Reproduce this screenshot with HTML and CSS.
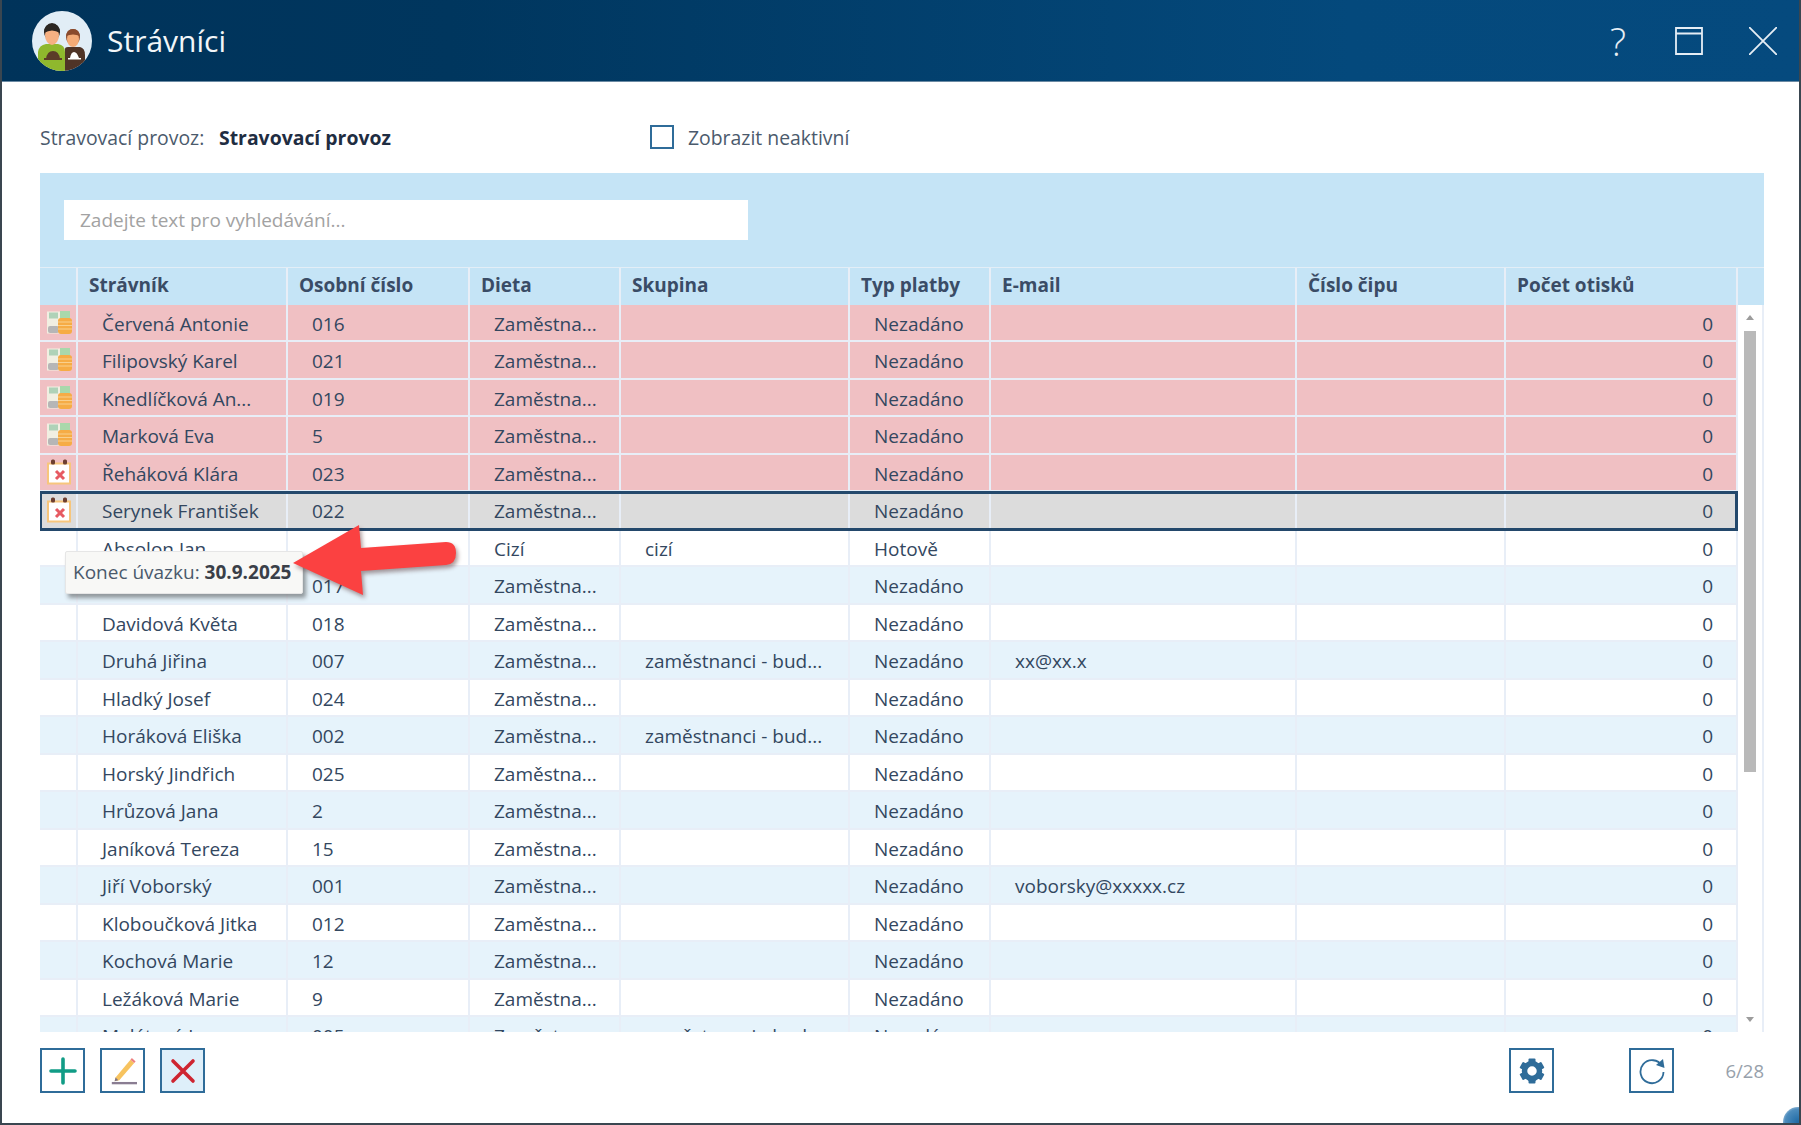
FILE: index.html
```html
<!DOCTYPE html>
<html lang="cs">
<head>
<meta charset="utf-8">
<title>Strávníci</title>
<link rel="stylesheet" href="styles.css">
</head>
<body>
<svg class="defs" width="0" height="0" aria-hidden="true">
  <symbol id="coins" viewBox="0 0 25 23">
    <rect x="0" y="0.500" width="15" height="22" fill="#f1efe2"/>
    <rect x="13" y="0" width="10" height="8" fill="#a9d8ab"/>
    <rect x="2" y="1.500" width="9" height="6" fill="#afd2b8"/>
    <rect x="1" y="15" width="11" height="7" rx="2" fill="#b6b6b6"/>
    <rect x="11" y="7" width="14" height="16" rx="3" fill="#f6ac45"/>
    <path d="M11 11h14M11 14.500h14M11 18h14" stroke="#f9d08e" stroke-width="1"/>
  </symbol>
  <symbol id="cal" viewBox="0 0 24 26">
    <rect x="1" y="4.500" width="22" height="20" fill="#fff" stroke="#f7c67c" stroke-width="2"/>
    <rect x="4" y="0.500" width="4" height="5" rx="1.500" fill="#6d3f30"/>
    <rect x="16" y="0.500" width="4" height="5" rx="1.500" fill="#6d3f30"/>
    <path d="M9 12l8 8M17 12l-8 8" stroke="#e65a62" stroke-width="3"/>
  </symbol>
</svg>

<div class="window">
  <header class="titlebar">
    <svg class="avatar" viewBox="0 0 60 60" aria-hidden="true">
      <circle cx="30" cy="30" r="30" fill="#e1edf6"/>
      <clipPath id="ac"><circle cx="30" cy="30" r="30"/></clipPath>
      <g clip-path="url(#ac)">
        <path d="M33 60V38q0-2 3-2h12q5 1 5 8v16z" fill="#4f3427"/>
        <ellipse cx="41" cy="26" rx="7" ry="8" fill="#8a4a2c"/>
        <ellipse cx="41" cy="28" rx="6" ry="8" fill="#f4ab77"/>
        <path d="M34 25q1-7 7-7t7 7q-7-3-14 0z" fill="#8a4a2c"/>
        <path d="M6 60V41q1-7 8-8h12q7 1 7 8v19z" fill="#8fb82d"/>
        <ellipse cx="20" cy="21" rx="8" ry="9" fill="#2c2622"/>
        <ellipse cx="20" cy="24" rx="7" ry="10" fill="#f6b082"/>
        <path d="M12 22q0-9 8-9t8 9q-8-5-16 0z" fill="#2c2622"/>
        <path d="M14 48q1-8 7-8t7 8z" fill="#5b3c28"/>
        <rect x="12" y="47" width="18" height="2" fill="#5b3c28"/>
        <path d="M38 47q1-6 4-6t5 6z" fill="#fff"/>
        <rect x="36" y="47" width="13" height="1.500" fill="#fff"/>
      </g>
    </svg>
    <h1 class="title">Strávníci</h1>
    <div class="win-actions">
      <span class="win-help">?</span>
      <svg class="win-icon" viewBox="0 0 28 28" aria-hidden="true"><path d="M1 1h26v26H1zM1 6.500h26" fill="none" stroke="#e6eef5" stroke-width="1.800"/></svg>
      <svg class="win-icon win-close" viewBox="0 0 28 28" aria-hidden="true"><path d="M0 0l28 28M28 0L0 28" fill="none" stroke="#e6eef5" stroke-width="1.800"/></svg>
    </div>
  </header>

  <main class="content">
    <div class="filters">
      <span class="filter-label">Stravovací provoz:</span>
      <strong class="filter-value">Stravovací provoz</strong>
      <label class="check"><span class="check-box"></span>Zobrazit neaktivní</label>
    </div>

    <section class="panel">
      <div class="search-area"><div class="search">Zadejte text pro vyhledávání...</div></div>
      <div class="row head">
        <div class="c"></div><div class="c">Strávník</div><div class="c">Osobní číslo</div><div class="c">Dieta</div><div class="c">Skupina</div><div class="c">Typ platby</div><div class="c">E-mail</div><div class="c">Číslo čipu</div><div class="c">Počet otisků</div><div class="c"></div>
      </div>
      <div class="body">
        <div class="rows">
          <div class="row red"><div class="c"><svg class="ico"><use href="#coins"/></svg></div><div class="c">Červená Antonie</div><div class="c">016</div><div class="c">Zaměstna...</div><div class="c"></div><div class="c">Nezadáno</div><div class="c"></div><div class="c"></div><div class="c num">0</div></div>
          <div class="row red"><div class="c"><svg class="ico"><use href="#coins"/></svg></div><div class="c">Filipovský Karel</div><div class="c">021</div><div class="c">Zaměstna...</div><div class="c"></div><div class="c">Nezadáno</div><div class="c"></div><div class="c"></div><div class="c num">0</div></div>
          <div class="row red"><div class="c"><svg class="ico"><use href="#coins"/></svg></div><div class="c">Knedlíčková An...</div><div class="c">019</div><div class="c">Zaměstna...</div><div class="c"></div><div class="c">Nezadáno</div><div class="c"></div><div class="c"></div><div class="c num">0</div></div>
          <div class="row red"><div class="c"><svg class="ico"><use href="#coins"/></svg></div><div class="c">Marková Eva</div><div class="c">5</div><div class="c">Zaměstna...</div><div class="c"></div><div class="c">Nezadáno</div><div class="c"></div><div class="c"></div><div class="c num">0</div></div>
          <div class="row red"><div class="c"><svg class="ico cal"><use href="#cal"/></svg></div><div class="c">Řeháková Klára</div><div class="c">023</div><div class="c">Zaměstna...</div><div class="c"></div><div class="c">Nezadáno</div><div class="c"></div><div class="c"></div><div class="c num">0</div></div>
          <div class="row selected"><div class="c"><svg class="ico cal"><use href="#cal"/></svg></div><div class="c">Serynek František</div><div class="c">022</div><div class="c">Zaměstna...</div><div class="c"></div><div class="c">Nezadáno</div><div class="c"></div><div class="c"></div><div class="c num">0</div></div>
          <div class="row"><div class="c"></div><div class="c">Absolon Jan</div><div class="c"></div><div class="c">Cizí</div><div class="c">cizí</div><div class="c">Hotově</div><div class="c"></div><div class="c"></div><div class="c num">0</div></div>
          <div class="row alt"><div class="c"></div><div class="c"></div><div class="c">017</div><div class="c">Zaměstna...</div><div class="c"></div><div class="c">Nezadáno</div><div class="c"></div><div class="c"></div><div class="c num">0</div></div>
          <div class="row"><div class="c"></div><div class="c">Davidová Květa</div><div class="c">018</div><div class="c">Zaměstna...</div><div class="c"></div><div class="c">Nezadáno</div><div class="c"></div><div class="c"></div><div class="c num">0</div></div>
          <div class="row alt"><div class="c"></div><div class="c">Druhá Jiřina</div><div class="c">007</div><div class="c">Zaměstna...</div><div class="c">zaměstnanci - bud...</div><div class="c">Nezadáno</div><div class="c">xx@xx.x</div><div class="c"></div><div class="c num">0</div></div>
          <div class="row"><div class="c"></div><div class="c">Hladký Josef</div><div class="c">024</div><div class="c">Zaměstna...</div><div class="c"></div><div class="c">Nezadáno</div><div class="c"></div><div class="c"></div><div class="c num">0</div></div>
          <div class="row alt"><div class="c"></div><div class="c">Horáková Eliška</div><div class="c">002</div><div class="c">Zaměstna...</div><div class="c">zaměstnanci - bud...</div><div class="c">Nezadáno</div><div class="c"></div><div class="c"></div><div class="c num">0</div></div>
          <div class="row"><div class="c"></div><div class="c">Horský Jindřich</div><div class="c">025</div><div class="c">Zaměstna...</div><div class="c"></div><div class="c">Nezadáno</div><div class="c"></div><div class="c"></div><div class="c num">0</div></div>
          <div class="row alt"><div class="c"></div><div class="c">Hrůzová Jana</div><div class="c">2</div><div class="c">Zaměstna...</div><div class="c"></div><div class="c">Nezadáno</div><div class="c"></div><div class="c"></div><div class="c num">0</div></div>
          <div class="row"><div class="c"></div><div class="c">Janíková Tereza</div><div class="c">15</div><div class="c">Zaměstna...</div><div class="c"></div><div class="c">Nezadáno</div><div class="c"></div><div class="c"></div><div class="c num">0</div></div>
          <div class="row alt"><div class="c"></div><div class="c">Jiří Voborský</div><div class="c">001</div><div class="c">Zaměstna...</div><div class="c"></div><div class="c">Nezadáno</div><div class="c">voborsky@xxxxx.cz</div><div class="c"></div><div class="c num">0</div></div>
          <div class="row"><div class="c"></div><div class="c">Kloboučková Jitka</div><div class="c">012</div><div class="c">Zaměstna...</div><div class="c"></div><div class="c">Nezadáno</div><div class="c"></div><div class="c"></div><div class="c num">0</div></div>
          <div class="row alt"><div class="c"></div><div class="c">Kochová Marie</div><div class="c">12</div><div class="c">Zaměstna...</div><div class="c"></div><div class="c">Nezadáno</div><div class="c"></div><div class="c"></div><div class="c num">0</div></div>
          <div class="row"><div class="c"></div><div class="c">Ležáková Marie</div><div class="c">9</div><div class="c">Zaměstna...</div><div class="c"></div><div class="c">Nezadáno</div><div class="c"></div><div class="c"></div><div class="c num">0</div></div>
          <div class="row alt"><div class="c"></div><div class="c">Malátová J.</div><div class="c">005</div><div class="c">Zaměstna...</div><div class="c">zaměstnanci - bud...</div><div class="c">Nezadáno</div><div class="c"></div><div class="c"></div><div class="c num">0</div></div>
        </div>
        <div class="scrollbar">
          <span class="arrow-up"></span>
          <div class="track"><div class="thumb"></div></div>
          <span class="arrow-down"></span>
        </div>
      </div>
    </section>

    <footer class="footer">
      <button class="btn" aria-label="Přidat"><svg viewBox="0 0 28 28"><path d="M14 2v24M2 14h24" stroke="#119c86" stroke-width="3.600" stroke-linecap="round" fill="none"/></svg></button>
      <button class="btn" aria-label="Upravit"><svg viewBox="0 0 30 30"><path d="M3 28h27" stroke="#8a7d92" stroke-width="2.500"/><path d="M7 22L23 3l4 3.500L11 25l-5 1z" fill="#f7c35f"/><path d="M23 3l1.500-1.800 4 3.500L27 6.500z" fill="#ee7f7f"/><path d="M7 22l-1 4 4-1z" fill="#7d7488"/></svg></button>
      <button class="btn btn-active" aria-label="Smazat"><svg viewBox="0 0 28 28"><path d="M4 4l20 20M24 4L4 24" stroke="#ce2531" stroke-width="3.600" stroke-linecap="round" fill="none"/></svg></button>
      <button class="btn btn-gear" aria-label="Nastavení"><svg viewBox="0 0 28 28"><g fill="#2f6c99"><rect x="10.500" y="1.500" width="7" height="6" rx="1"/><rect x="10.500" y="1.500" width="7" height="6" rx="1" transform="rotate(60 14 14)"/><rect x="10.500" y="1.500" width="7" height="6" rx="1" transform="rotate(120 14 14)"/><rect x="10.500" y="1.500" width="7" height="6" rx="1" transform="rotate(180 14 14)"/><rect x="10.500" y="1.500" width="7" height="6" rx="1" transform="rotate(240 14 14)"/><rect x="10.500" y="1.500" width="7" height="6" rx="1" transform="rotate(300 14 14)"/></g><circle cx="14" cy="14" r="7.500" fill="none" stroke="#2f6c99" stroke-width="5.500"/></svg></button>
      <button class="btn btn-refresh" aria-label="Obnovit"><svg viewBox="0 0 28 28"><path d="M24 9A11.500 11.500 0 1 0 25.500 15" fill="none" stroke="#2f6c99" stroke-width="1.800"/><path d="M18 8l8.500 3L25 2z" fill="#2f6c99"/></svg></button>
      <span class="counter">6/28</span>
    </footer>

    <div class="tooltip">Konec úvazku: <b>30.9.2025</b></div>
    <svg class="red-arrow" viewBox="0 0 175 80" aria-hidden="true">
      <path d="M2 41L68 3l2 23 85-6q10 0 10 11t-10 12l-85 6 2 24z" fill="#fb4141"/>
    </svg>
  </main>
  <div class="corner"></div>
</div>
</body>
</html>
```

FILE: styles.css
```css
* { box-sizing: border-box; }
html, body { margin: 0; height: 100%; }
body {
  font-family: "Open Sans", "Noto Sans", sans-serif;
  font-size: 19px;
  color: #33475f;
  background: #fff;
  overflow: hidden;
}
.defs { position: absolute; }

.window {
  position: relative;
  width: 1801px;
  height: 1125px;
  display: flex;
  flex-direction: column;
  border-right: 2px solid #3a4650;
  border-bottom: 2px solid #3a4650;
  border-left: 2px solid #3a4650;
  overflow: hidden;
}

.titlebar {
  flex: none;
  height: 82px;
  padding: 0 22px 0 30px;
  display: flex;
  align-items: center;
  background: linear-gradient(90deg, #00335a 0%, #00365e 25%, #04497c 75%, #054a7e 100%);
  border-bottom: 1px solid #6b8aa3;
  color: #fff;
}
.avatar { width: 60px; height: 60px; flex: none; }
.title {
  margin: 0 0 0 15px;
  font-size: 30px;
  font-weight: 400;
  color: #f2f6f9;
}
.win-actions {
  margin-left: auto;
  display: flex;
  align-items: center;
}
.win-help { margin-right: 49px; font-size: 38px; line-height: 1; color: #e6eef5; font-weight: 300; }
.win-close { margin-left: 46px; }
.win-icon { width: 28px; height: 28px; display: block; }

.content {
  position: relative;
  flex: 1;
  padding: 0 35px 0 38px;
  display: flex;
  flex-direction: column;
}

.filters {
  height: 91px;
  display: flex;
  align-items: center;
  padding-top: 19px;
  font-size: 19.400px;
}
.filter-label { width: 179px; color: #4b5a6c; white-space: nowrap; }
.filter-value { width: 431px; color: #1f2d42; font-weight: 700; }
.check { display: flex; align-items: center; gap: 14px; color: #4b5a6c; }
.check-box {
  width: 24px;
  height: 24px;
  border: 2px solid #2f6c99;
  background: #fff;
}

.panel {
  display: flex;
  flex-direction: column;
  height: 859px;
  background: #c5e4f6;
  overflow: hidden;
}
.search-area { height: 94px; padding: 27px 24px 0; flex: none; }
.search {
  width: 684px;
  height: 40px;
  padding-left: 16px;
  line-height: 40px;
  background: #fff;
  color: #a2a2a2;
}

.row {
  display: grid;
  grid-template-columns: 38px 210px 182px 151px 229px 141px 306px 209px 232px;
  height: 37.5px;
  flex: none;
  background: #fff;
}
.c {
  padding: 1px 10px 0 24px;
  line-height: 36px;
  white-space: nowrap;
  overflow: hidden;
  border-right: 2px solid #e8eef7;
  border-bottom: 2px solid #e8eef7;
}
.c:first-child { padding: 0 0 0 2px; display: flex; align-items: center; justify-content: center; }
.num { text-align: right; padding-right: 23px; }
.row.red { background: #f0c0c3; }
.row.alt { background: #e6f3fb; }
.row.selected {
  position: relative;
  margin-right: 1px;
  background: #dcdcdc;
  outline: 3px solid #23486b;
  outline-offset: -2px;
  z-index: 1;
}

.row.head {
  grid-template-columns: 38px 210px 182px 151px 229px 141px 306px 209px 232px 26px;
  background: #c5e4f6;
  font-weight: 700;
  color: #3a4c66;
  border-top: 1px solid #e3eef7;
}
.head .c { padding: 0 0 0 11px; line-height: 34px; border-bottom: 0; }
.head .c:last-child { border-right: 0; }

.body { display: flex; flex: 1; min-height: 0; background: #fff; overflow: hidden; }
.rows { width: 1698px; flex: none; }
.ico { width: 25px; height: 23px; display: block; }
.ico.cal { width: 24px; height: 26px; }

.scrollbar {
  flex: 1;
  display: flex;
  flex-direction: column;
  align-items: center;
  background: #fff;
  border-right: 2px solid #e8eef7;
  padding: 10px 0;
}
.arrow-up, .arrow-down {
  width: 0; height: 0; flex: none;
  border-left: 4px solid transparent;
  border-right: 4px solid transparent;
}
.arrow-up { border-bottom: 5px solid #9c9c9c; }
.arrow-down { border-top: 5px solid #9c9c9c; }
.track { flex: 1; width: 12px; padding-top: 11px; }
.thumb { height: 441px; background: #b9b9b9; }

.footer {
  margin-top: 16px;
  display: flex;
  align-items: center;
  gap: 15px;
}
.btn {
  width: 45px;
  height: 45px;
  padding: 0;
  border: 2px solid #2f6c99;
  background: #fff;
  display: flex;
  align-items: center;
  justify-content: center;
}
.btn svg { width: 28px; height: 28px; display: block; }
.btn-active { background: #deeffa; }
.btn-gear { margin-left: auto; }
.btn-refresh { margin-left: 60px; }
.counter { margin-left: 36px; font-size: 18.500px; color: #97a1ab; }

.tooltip {
  position: absolute;
  left: 63px;
  top: 469px;
  width: 238px;
  height: 43px;
  padding-left: 7px;
  line-height: 41px;
  font-size: 19px;
  white-space: nowrap;
  background: #f8f8f6;
  color: #4b5a6c;
  border: 1px solid #e6e6e6;
  border-radius: 2px;
  box-shadow: 3px 4px 4px rgba(40, 40, 40, .45);
  z-index: 2;
}
.tooltip b { color: #3a3f48; }
.red-arrow {
  position: absolute;
  left: 289px;
  top: 440px;
  width: 175px;
  height: 80px;
  z-index: 3;
  overflow: visible;
  filter: drop-shadow(2px 3px 2px rgba(70, 30, 30, .45));
}
.corner {
  position: absolute;
  right: -14px;
  bottom: -14px;
  width: 30px;
  height: 30px;
  border-radius: 50%;
  background: radial-gradient(circle, #1f6aa5 0%, #4d8cbd 60%, rgba(255,255,255,0) 100%);
}
```
